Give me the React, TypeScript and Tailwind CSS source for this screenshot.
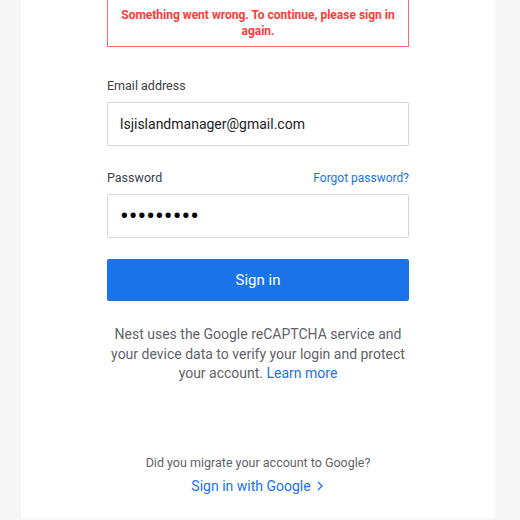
export default function App() {
  return (
    <div className="h-[520px] w-[520px] overflow-hidden bg-[#f7f7f7] pl-[21px] font-['Roboto',sans-serif]">
      <div className="flex h-[518px] w-[474px] flex-col bg-white px-[86px]">
        <div className="-mt-px border border-[#ff6b6b] px-[10px] pb-[7px] pt-[7px] text-center text-[12px] font-bold leading-4 text-[#ff3b3b]">
          Something went wrong. To continue, please sign in again.
        </div>

        <label className="mt-[29px] text-[12.5px] leading-5 text-[#3c4043]">Email address</label>
        <div className="mt-[6px] flex h-[44px] items-center rounded-[2px] border border-[#cfd6dd] pl-3 text-[14px] text-[#202124]">
          lsjislandmanager@gmail.com
        </div>

        <div className="mt-[22px] flex items-center justify-between leading-5">
          <span className="text-[12.5px] text-[#3c4043]">Password</span>
          <a className="text-[12px] text-[#1a73e8]">Forgot password?</a>
        </div>
        <div className="mt-[6px] flex h-[44px] items-center rounded-[2px] border border-[#cfd6dd] pl-3 text-[26px] text-black">
          •••••••••
        </div>

        <button className="mt-[21px] h-[42px] rounded-[2px] bg-[#1a73e8] text-[15px] text-white">Sign in</button>

        <p className="mt-[24px] text-center text-[14px] leading-[19.5px] text-[#5f6368]">
          Nest uses the Google reCAPTCHA service and your device data to verify your login and protect your account.{" "}
          <a className="text-[#1a73e8]">Learn more</a>
        </p>

        <p className="mt-[69px] text-center text-[12.5px] leading-5 text-[#5f6368]">Did you migrate your account to Google?</p>
        <a className="mt-[3px] flex items-center justify-center gap-1 text-[14px] leading-5 text-[#1a73e8]">
          Sign in with Google
          <svg width="10" height="12" viewBox="0 0 10 12" fill="none" stroke="currentColor" strokeWidth="1.3">
            <path d="M3 2l4 4-4 4" />
          </svg>
        </a>
      </div>
    </div>
  );
}
